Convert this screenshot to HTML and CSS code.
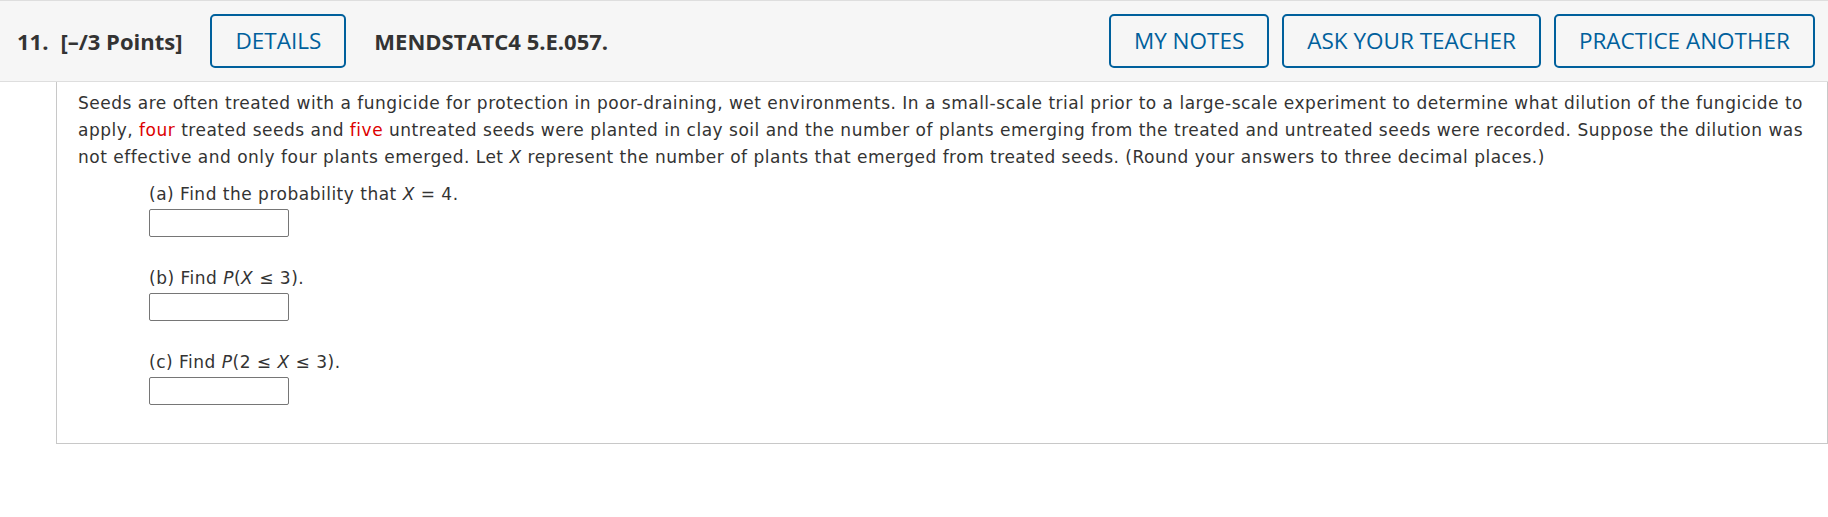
FILE: index.html
```html
<!DOCTYPE html>
<html lang="en">
<head>
<meta charset="utf-8">
<title>Question 11</title>
<link rel="stylesheet" href="styles.css">
</head>
<body>
<div class="qheader">
  <span class="qnum">11.</span>
  <span class="qpoints">[&ndash;/3 Points]</span>
  <button class="btn btn-details">DETAILS</button>
  <span class="qtitle">MENDSTATC4 5.E.057.</span>
  <div class="spacer"></div>
  <div class="actions">
    <button class="btn">MY NOTES</button>
    <button class="btn">ASK YOUR TEACHER</button>
    <button class="btn">PRACTICE ANOTHER</button>
  </div>
</div>
<div class="qbody">
  <p class="stem">Seeds are often treated with a fungicide for protection in poor-draining, wet environments. In a small-scale trial prior to a large-scale experiment to determine what dilution of the fungicide to apply, <span class="red">four</span> treated seeds and <span class="red">five</span> untreated seeds were planted in clay soil and the number of plants emerging from the treated and untreated seeds were recorded. Suppose the dilution was not effective and only four plants emerged. Let <i>X</i> represent the number of plants that emerged from treated seeds. (Round your answers to three decimal places.)</p>
  <div class="parts">
    <div class="part">
      <div class="plabel">(a) Find the probability that <i>X</i> = 4.</div>
      <input class="answer" type="text">
    </div>
    <div class="part">
      <div class="plabel">(b) Find <i>P</i>(<i>X</i> &le; 3).</div>
      <input class="answer" type="text">
    </div>
    <div class="part">
      <div class="plabel">(c) Find <i>P</i>(2 &le; <i>X</i> &le; 3).</div>
      <input class="answer" type="text">
    </div>
  </div>
</div>
</body>
</html>
```

FILE: styles.css
```css
html, body {
  margin: 0;
  padding: 0;
  background: #ffffff;
}

.qheader {
  display: flex;
  align-items: center;
  height: 80px;
  background: #f6f6f6;
  border-top: 1px solid #dedede;
  border-bottom: 1px solid #dedede;
  padding: 0 13px 0 17px;
  font-family: "Open Sans", "Noto Sans", sans-serif;
  color: #333333;
}

.qnum {
  font-weight: 700;
  font-size: 22px;
}

.qpoints {
  font-weight: 700;
  font-size: 22px;
  margin-left: 12px;
}

.qtitle {
  font-weight: 700;
  font-size: 22px;
  margin-left: 28px;
}

.spacer {
  flex: 1;
}

.actions {
  display: flex;
  gap: 13px;
}

.btn {
  height: 54px;
  padding: 0 23px;
  border: 2px solid #00609c;
  border-radius: 5px;
  background: transparent;
  color: #00609c;
  font-family: "Open Sans", "Noto Sans", sans-serif;
  font-size: 22.5px;
  font-weight: 400;
  line-height: 1;
}

.btn-details {
  margin-left: 28px;
}

.qbody {
  margin-left: 56px;
  border-left: 1px solid #c8c8c8;
  border-right: 1px solid #c8c8c8;
  border-bottom: 1px solid #c8c8c8;
  padding: 8px 12px 38px 21px;
  font-family: "DejaVu Sans", Verdana, sans-serif;
  font-size: 17px;
  letter-spacing: 0.5px;
  line-height: 27px;
  color: #333333;
}

.stem {
  margin: 0;
}

.red {
  color: #dd0000;
}

.parts {
  padding-left: 71px;
  margin-top: 10px;
  display: flex;
  flex-direction: column;
  gap: 28px;
}

.plabel {
  line-height: 27px;
}

.answer {
  display: block;
  box-sizing: border-box;
  width: 140px;
  height: 28px;
  margin: 1px 0 0 0;
  border: 1px solid #767676;
  border-radius: 2px;
  padding: 0 4px;
  background: #ffffff;
  font-family: "DejaVu Sans", Verdana, sans-serif;
  font-size: 16px;
}
```
